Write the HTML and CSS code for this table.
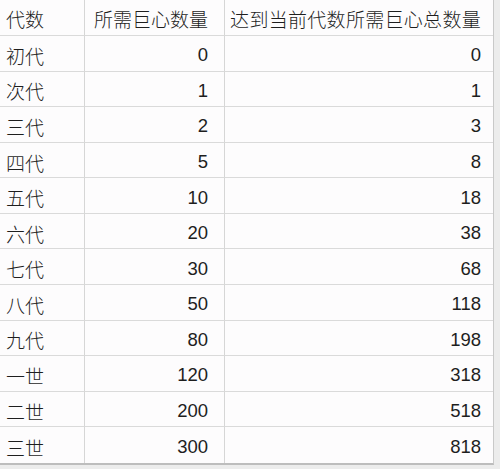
FILE: index.html
```html
<!DOCTYPE html>
<html lang="zh-CN">
<head>
<meta charset="utf-8">
<link rel="stylesheet" href="styles.css">
</head>
<body>
<div class="sheet">
  <div class="cell c1 head">代数</div>
  <div class="cell c2 head">所需巨心数量</div>
  <div class="cell c3 head">达到当前代数所需巨心总数量</div>

  <div class="cell c1">初代</div><div class="cell c2 num">0</div><div class="cell c3 num">0</div>
  <div class="cell c1">次代</div><div class="cell c2 num">1</div><div class="cell c3 num">1</div>
  <div class="cell c1">三代</div><div class="cell c2 num">2</div><div class="cell c3 num">3</div>
  <div class="cell c1">四代</div><div class="cell c2 num">5</div><div class="cell c3 num">8</div>
  <div class="cell c1">五代</div><div class="cell c2 num">10</div><div class="cell c3 num">18</div>
  <div class="cell c1">六代</div><div class="cell c2 num">20</div><div class="cell c3 num">38</div>
  <div class="cell c1">七代</div><div class="cell c2 num">30</div><div class="cell c3 num">68</div>
  <div class="cell c1">八代</div><div class="cell c2 num">50</div><div class="cell c3 num">118</div>
  <div class="cell c1">九代</div><div class="cell c2 num">80</div><div class="cell c3 num">198</div>
  <div class="cell c1">一世</div><div class="cell c2 num">120</div><div class="cell c3 num">318</div>
  <div class="cell c1">二世</div><div class="cell c2 num">200</div><div class="cell c3 num">518</div>
  <div class="cell c1 last">三世</div><div class="cell c2 num last">300</div><div class="cell c3 num last">818</div>
</div>
</body>
</html>
```
FILE: styles.css
```css
html, body {
  margin: 0;
  padding: 0;
}
body {
  background: #ececec;
  width: 500px;
  height: 469px;
  overflow: hidden;
  font-family: "Liberation Sans", "Noto Sans CJK SC", sans-serif;
  color: #1e1e1e;
}
.sheet {
  display: grid;
  grid-template-columns: 85px 140px 268px;
  grid-template-rows: 36px;
  grid-auto-rows: 35.58px;
  width: 493px;
  background: #fdfcfd;
  border-right: 1px solid #c9c9c9;
  border-bottom: 2px solid #bdbdbd;
  box-sizing: content-box;
}
.cell {
  display: flex;
  align-items: center;
  box-sizing: border-box;
  padding-top: 4px;
  font-size: 19px;
  font-weight: 300;
  border-bottom: 1px solid #dadada;
  border-right: 1px solid #d6d6d6;
  white-space: nowrap;
}
.c1 {
  padding-left: 6px;
}
.c2 {
  justify-content: flex-end;
  padding-right: 16px;
}
.c3 {
  justify-content: flex-end;
  padding-right: 12px;
  border-right: none;
}
.head {
  padding-top: 2px;
}
.head.c3 {
  letter-spacing: 0.3px;
}
.num {
  font-size: 18.5px;
  font-weight: 400;
}
.last {
  border-bottom: none;
}
```
